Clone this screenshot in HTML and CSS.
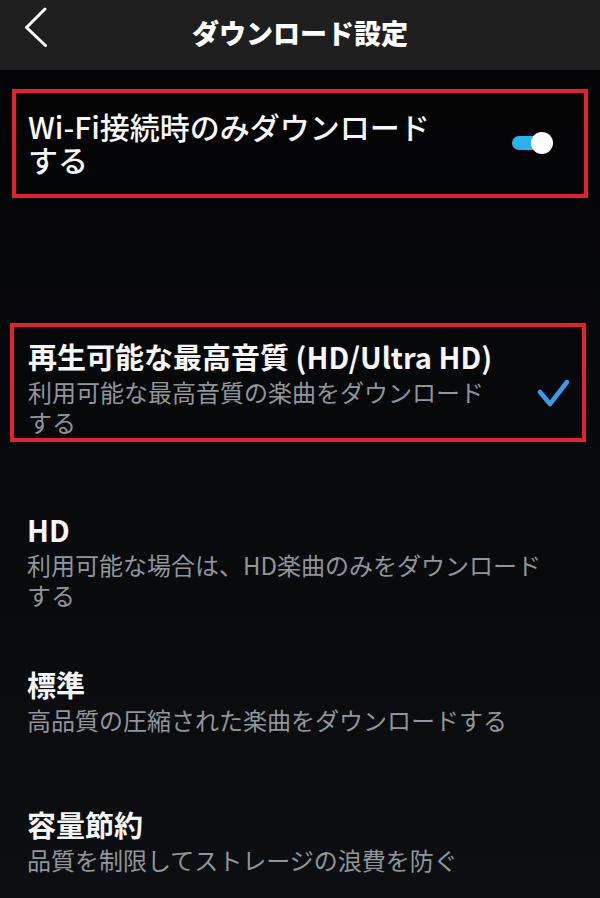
FILE: index.html
```html
<!DOCTYPE html>
<html lang="ja">
<head>
<meta charset="utf-8">
<title>ダウンロード設定</title>
<link rel="stylesheet" href="styles.css">
</head>
<body>
<header class="topbar">
  <div class="back" aria-label="戻る">
    <svg class="back-icon" width="30" height="44" viewBox="0 0 30 44">
      <polyline points="25,2 6.5,20.5 25.5,38.5" fill="none" stroke="#ffffff" stroke-width="3" stroke-linecap="round" stroke-linejoin="round"/>
    </svg>
  </div>
  <h1 class="title">ダウンロード設定</h1>
  <div class="spacer"></div>
</header>
<main class="content">
  <section class="box wifi">
    <div class="wifi-text">Wi-Fi接続時のみダウンロードする</div>
    <span class="toggle"><span class="knob"></span></span>
  </section>

  <section class="box quality">
    <div class="opt-text">
      <div class="opt-title">再生可能な最高音質 (HD/Ultra HD)</div>
      <div class="opt-sub narrow">利用可能な最高音質の楽曲をダウンロードする</div>
    </div>
    <svg class="check" width="34" height="30" viewBox="0 0 34 30">
      <polyline points="4,12 14,24 31,2" fill="none" stroke="#3d9cea" stroke-width="4.5" stroke-linecap="round" stroke-linejoin="round"/>
    </svg>
  </section>

  <div class="opt first">
    <div class="opt-title">HD</div>
    <div class="opt-sub">利用可能な場合は、HD楽曲のみをダウンロードする</div>
  </div>
  <div class="opt">
    <div class="opt-title">標準</div>
    <div class="opt-sub">高品質の圧縮された楽曲をダウンロードする</div>
  </div>
  <div class="opt">
    <div class="opt-title">容量節約</div>
    <div class="opt-sub">品質を制限してストレージの浪費を防ぐ</div>
  </div>
</main>
</body>
</html>
```
FILE: styles.css
```css
* { box-sizing: border-box; }
html, body {
  margin: 0;
  padding: 0;
}
body {
  width: 600px;
  height: 898px;
  overflow: hidden;
  background: linear-gradient(#030304, #0c0e11);
  color: #f4f4f4;
  font-family: "Noto Sans CJK JP", "Noto Sans", sans-serif;
}
.topbar {
  height: 70px;
  background: #1f1f1f;
  display: grid;
  grid-template-columns: 1fr auto 1fr;
  align-items: start;
}
.back {
  padding: 7px 0 0 20px;
}
.back-icon { display: block; }
.title {
  margin: 0;
  padding-top: 17px;
  font-size: 27px;
  line-height: 32px;
  font-weight: 900;
  color: #ffffff;
  letter-spacing: 0;
}
.content {
  display: flex;
  flex-direction: column;
}
.box {
  border: 4px solid #e0232c;
  display: flex;
  align-items: center;
}
.wifi {
  margin: 19px 12px 0 12px;
  padding: 17px 34px 18px 12px;
}
.wifi-text {
  flex: 1;
  max-width: 418px;
  font-size: 30px;
  line-height: 33px;
  font-weight: 500;
  color: #f6f6f6;
}
.toggle {
  margin-left: auto;
  position: relative;
  width: 38px;
  height: 14px;
  border-radius: 7px;
  background: #2ab2ea;
}
.knob {
  position: absolute;
  right: -3px;
  top: -4px;
  width: 22px;
  height: 22px;
  border-radius: 50%;
  background: #ffffff;
}
.quality {
  margin: 125px 14px 0 10px;
  padding: 12px 12px 1px 14px;
}
.opt-text {
  flex: 1;
}
.opt-title {
  font-size: 29px;
  line-height: 34px;
  font-weight: 700;
  color: #f6f6f6;
  white-space: nowrap;
}
.opt-sub {
  margin-top: 4px;
  max-width: 525px;
  font-size: 24px;
  line-height: 30px;
  color: #90959c;
}
.opt-sub.narrow {
  max-width: 470px;
}
.check {
  display: block;
  margin-top: 13px;
  flex: none;
}
.opt {
  padding: 0 28px 57px 27px;
  min-height: 140px;
}
.opt:last-child {
  padding-bottom: 0;
  min-height: 0;
}
.opt.first {
  margin-top: 70px;
}
```
